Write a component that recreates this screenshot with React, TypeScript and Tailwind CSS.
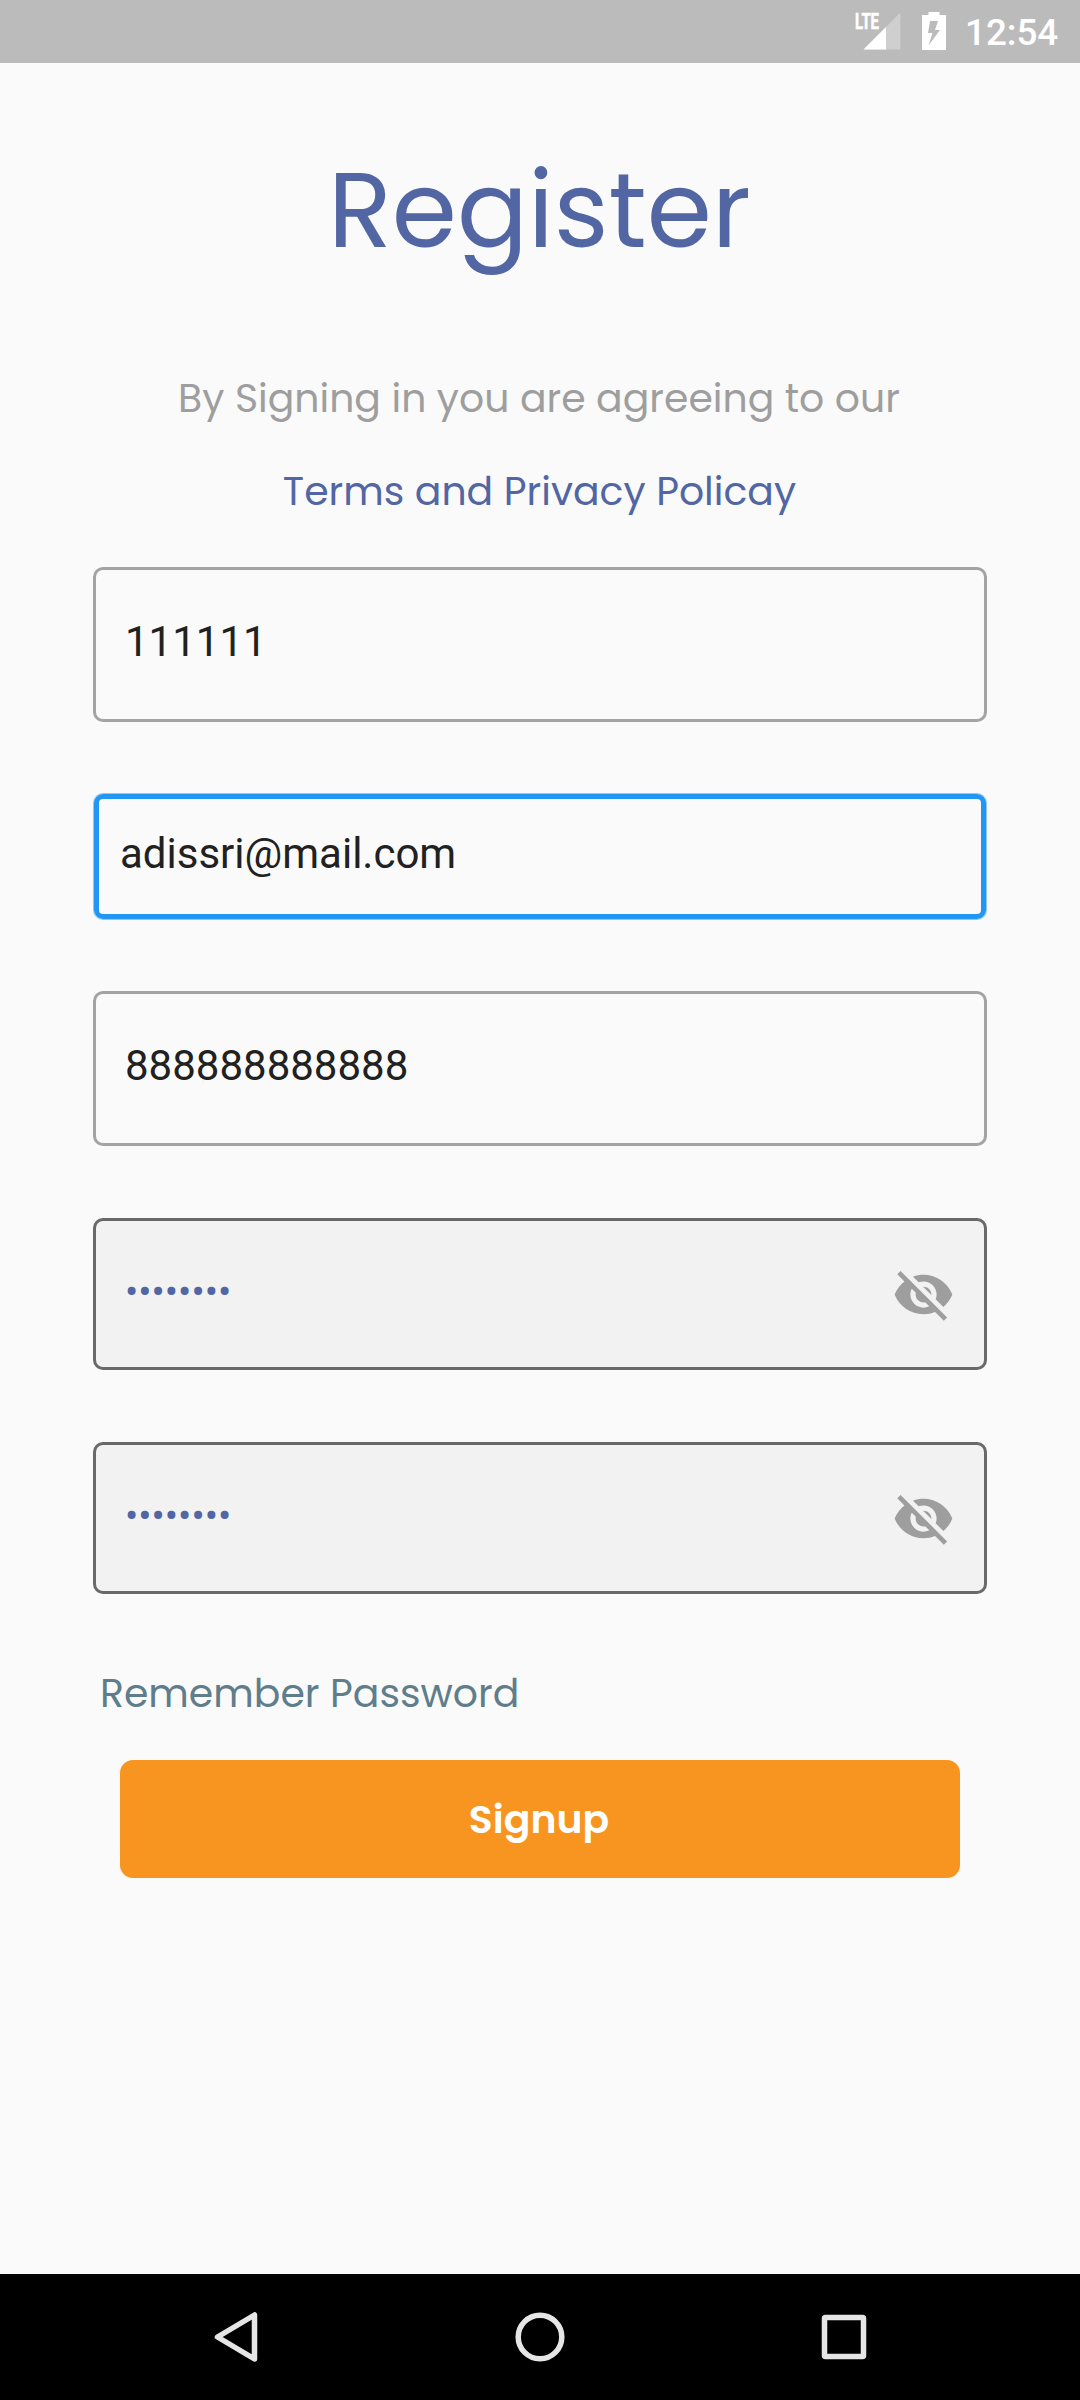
import { MdVisibilityOff } from "react-icons/md";

function StatusBar() {
  return (
    <header className="flex h-[63px] items-start bg-[#bbbbbb] pl-[851px] text-white">
      <svg className="mt-[8px] h-[42px] w-[50px]" viewBox="0 0 50 42" fill="#fff">
        <path d="M49.300 4.700V41.500H12.500z" fillOpacity=".3" />
        <path d="M35 19V41.500H12.500z" />
        <text x="4" y="21" fontSize="21.500" fontWeight="700" fontFamily="Roboto, sans-serif" stroke="#fff" strokeWidth=".6" textLength="24" lengthAdjust="spacingAndGlyphs">LTE</text>
      </svg>
      <svg className="ml-[21px] mt-[12px] h-[38px] w-[24px]" viewBox="0 0 24 38" fill="#fff">
        <path fillRule="evenodd" d="M6.500 0H17.500V3H24V38H0V3H6.500zM8 9L6 21H10.500L6.500 33.500L18 18H13L16 9z" />
      </svg>
      <span className="ml-[19px] mt-[11px] font-[Roboto,sans-serif] text-[36.75px] leading-[44px] font-medium">12:54</span>
    </header>
  );
}

function PasswordField() {
  return (
    <div className="mt-[72px] flex h-[152px] items-start justify-between rounded-[10px] border-[3px] border-[#696969] bg-[#f2f2f2] pl-[29px] pr-[29px]">
      <span className="mt-[46px] font-[Roboto,sans-serif] text-[39.375px] leading-[50px] text-[#5166a3]">••••••••</span>
      <MdVisibilityOff className="mt-[42px] size-[63px] text-[#9e9e9e]" />
    </div>
  );
}

export default function App() {
  return (
    <div className="flex h-[2400px] w-[1080px] flex-col bg-[#fafafa]">
      <StatusBar />
      <main className="flex flex-1 flex-col px-[93px] font-[Poppins,sans-serif]">
        <h1 className="mt-[88px] pr-[1px] text-center text-[105px] leading-[120px] text-[#5166a3]">Register</h1>
        <p className="mt-[98px] pr-[2px] text-center text-[39.375px] leading-[60px] text-[#9e9e9e]">By Signing in you are agreeing to our</p>
        <p className="mt-[33px] pr-[1px] text-center text-[39.375px] leading-[60px] text-[#5166a3]">Terms and Privacy Policay</p>
        <div className="mt-[45px] h-[155px] rounded-[10px] border-[3px] border-[#a3a3a3] pl-[29px] pt-[47px] font-[Roboto,sans-serif] text-[42px] leading-[50px] text-[#212121]">111111</div>
        <div className="mx-[1px] mt-[72px] h-[125px] rounded-[9px] border-[5px] border-[#2196f3] pl-[21px] pt-[30px] font-[Roboto,sans-serif] text-[42px] leading-[50px] text-[#212121] shadow-[0_0_0_1px_rgba(33,150,243,0.5)]">adissri@mail.com</div>
        <div className="mt-[72px] h-[155px] rounded-[10px] border-[3px] border-[#a3a3a3] pl-[29px] pt-[47px] font-[Roboto,sans-serif] text-[42px] leading-[50px] text-[#212121]">888888888888</div>
        <PasswordField />
        <PasswordField />
        <p className="mt-[70px] pl-[7px] text-[39.375px] leading-[60px] text-[#607d8b]">Remember Password</p>
        <button className="mx-[27px] mt-[36px] h-[118px] rounded-[13px] bg-[#f89520] pt-[2px] pr-[2px] text-[39.375px] font-semibold text-white">Signup</button>
      </main>
      <nav className="flex h-[126px] bg-black" aria-label="System navigation">
        <svg className="h-[126px] w-[1080px]" viewBox="0 0 1080 126" fill="none" stroke="#e6e6e6" strokeWidth="5.5" strokeLinejoin="round">
          <path d="M254.500 41V85L217.500 63z" />
          <circle cx="540" cy="63" r="21.800" />
          <rect x="824.500" y="43.500" width="39" height="39" rx="1" />
        </svg>
      </nav>
    </div>
  );
}
